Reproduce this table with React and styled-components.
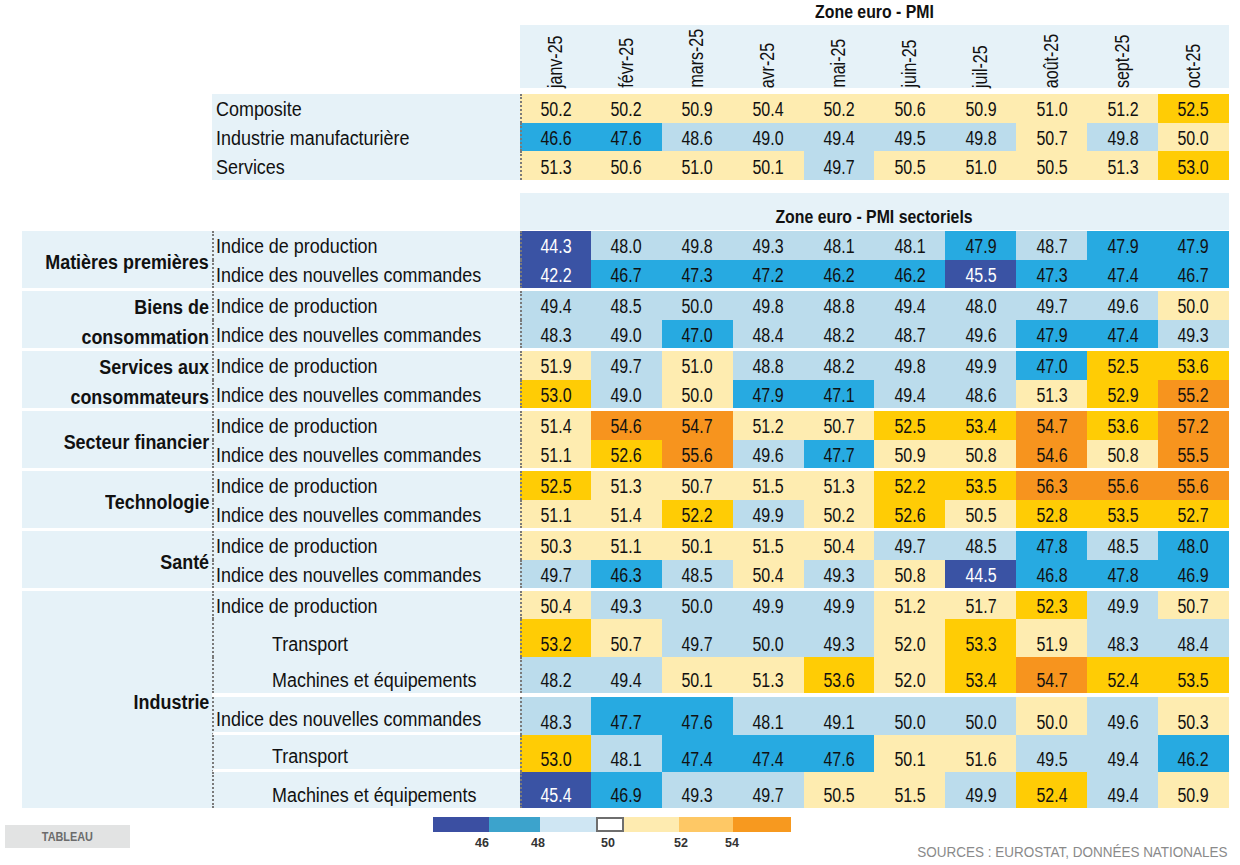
import React from 'react';
import styled, { createGlobalStyle, css } from 'styled-components';

const FONT = `"Liberation Sans", Arial, sans-serif`;
const LIGHT = '#e6f2f8';
const DOTS = '2px dotted #7a7a7a';

const LEVELS = {
  D: { bg: '#3a53a4', fg: '#fff' },
  B: { bg: '#27aae1', fg: '#111' },
  L: { bg: '#bbdcec', fg: '#111' },
  Y: { bg: '#feecb0', fg: '#111' },
  G: { bg: '#ffcc05', fg: '#111' },
  O: { bg: '#f7941e', fg: '#111' },
};

const MONTHS = ['janv-25', 'févr-25', 'mars-25', 'avr-25', 'mai-25', 'juin-25', 'juil-25', 'août-25', 'sept-25', 'oct-25'];

const TOP = [
  ['Composite', ['50.2', '50.2', '50.9', '50.4', '50.2', '50.6', '50.9', '51.0', '51.2', '52.5']],
  ['Industrie manufacturière', ['46.6', '47.6', '48.6', '49.0', '49.4', '49.5', '49.8', '50.7', '49.8', '50.0']],
  ['Services', ['51.3', '50.6', '51.0', '50.1', '49.7', '50.5', '51.0', '50.5', '51.3', '53.0']],
];

const PROD = 'Indice de production';
const CMD = 'Indice des nouvelles commandes';

const SECTORS = [
  { name: 'Matières premières', rows: [
    { label: PROD, v: ['44.3', '48.0', '49.8', '49.3', '48.1', '48.1', '47.9', '48.7', '47.9', '47.9'] },
    { label: CMD, v: ['42.2', '46.7', '47.3', '47.2', '46.2', '46.2', '45.5', '47.3', '47.4', '46.7'] },
  ] },
  { name: 'Biens de consommation', rows: [
    { label: PROD, v: ['49.4', '48.5', '50.0L', '49.8', '48.8', '49.4', '48.0', '49.7', '49.6', '50.0'] },
    { label: CMD, v: ['48.3', '49.0', '47.0', '48.4', '48.2', '48.7', '49.6', '47.9', '47.4', '49.3'] },
  ] },
  { name: 'Services aux consommateurs', rows: [
    { label: PROD, v: ['51.9', '49.7', '51.0', '48.8', '48.2', '49.8', '49.9', '47.0', '52.5', '53.6'] },
    { label: CMD, v: ['53.0', '49.0', '50.0', '47.9', '47.1', '49.4', '48.6', '51.3', '52.9', '55.2'] },
  ] },
  { name: 'Secteur financier', rows: [
    { label: PROD, v: ['51.4', '54.6', '54.7', '51.2', '50.7', '52.5', '53.4', '54.7', '53.6', '57.2'] },
    { label: CMD, v: ['51.1', '52.6', '55.6', '49.6', '47.7', '50.9', '50.8', '54.6', '50.8', '55.5'] },
  ] },
  { name: 'Technologie', rows: [
    { label: PROD, v: ['52.5', '51.3', '50.7', '51.5', '51.3', '52.2', '53.5', '56.3', '55.6', '55.6'] },
    { label: CMD, v: ['51.1', '51.4', '52.2', '49.9', '50.2', '52.6', '50.5', '52.8', '53.5', '52.7'] },
  ] },
  { name: 'Santé', rows: [
    { label: PROD, v: ['50.3', '51.1', '50.1', '51.5', '50.4', '49.7', '48.5', '47.8', '48.5', '48.0B'] },
    { label: CMD, v: ['49.7', '46.3', '48.5', '50.4', '49.3', '50.8', '44.5', '46.8', '47.8', '46.9'] },
  ] },
];

const INDUSTRIE = [
  { label: PROD, v: ['50.4', '49.3', '50.0L', '49.9', '49.9', '51.2', '51.7', '52.3', '49.9', '50.7'] },
  { label: 'Transport', indent: true, v: ['53.2', '50.7', '49.7', '50.0L', '49.3', '52.0Y', '53.3', '51.9', '48.3', '48.4'] },
  { label: 'Machines et équipements', indent: true, v: ['48.2', '49.4', '50.1', '51.3', '53.6', '52.0Y', '53.4', '54.7', '52.4', '53.5'] },
  'gap',
  { label: CMD, cut: true, v: ['48.3', '47.7', '47.6', '48.1', '49.1', '50.0L', '50.0L', '50.0', '49.6', '50.3'] },
  { label: 'Transport', indent: true, cut: true, v: ['53.0', '48.1', '47.4', '47.4', '47.6', '50.1', '51.6', '49.5', '49.4', '46.2'] },
  { label: 'Machines et équipements', indent: true, v: ['45.4', '46.9', '49.3', '49.7', '50.5', '51.5', '49.9', '52.4', '49.4', '50.9'] },
];

const LEGEND = [
  { w: 55.6, c: '#3b4fa2' },
  { w: 51.7, c: '#3ca3cc' },
  { w: 55.7, c: '#cfe6f3' },
  { w: 28.3, c: '#fff', box: true },
  { w: 54.3, c: '#feebb0' },
  { w: 54, c: '#fec865' },
  { w: 58, c: '#f7991f' },
];
const TICKS = [['46', 49], ['48', 105], ['50', 175], ['52', 248], ['54', 299]];

// "50.0L" forces a colour class, otherwise it comes from thresholds
function parse(raw) {
  const forced = /[A-Z]$/.test(raw) ? raw.slice(-1) : null;
  const text = forced ? raw.slice(0, -1) : raw;
  const n = parseFloat(text);
  let level = forced;
  if (!level) {
    if (n < 46) level = 'D';
    else if (n < 48) level = 'B';
    else if (n < 50) level = 'L';
    else if (n < 52) level = 'Y';
    else if (n < 54) level = 'G';
    else level = 'O';
  }
  return { text, level };
}

const GlobalStyle = createGlobalStyle`
  html, body {
    margin: 0;
    padding: 0;
    background: #fff;
  }
  body {
    font-family: ${FONT};
    color: #111;
  }
`;

const Page = styled.div`
  width: 1240px;
  height: 865px;
  overflow: hidden;
`;

const Sheet = styled.div`
  width: 1207px;
  margin-left: 22px;
`;

const Grid = styled.div`
  display: grid;
  grid-template-columns: 190px 308px repeat(10, 70.9px);
  ${p => p.$rows && css`grid-template-rows: ${p.$rows};`}
  ${p => p.$auto && css`grid-auto-rows: ${p.$auto};`}
  margin-top: ${p => p.$top || 0}px;
`;

// narrow-looking text: the glyphs are squeezed sideways, the box is kept
const Squeeze = styled.span`
  display: inline-block;
  transform: scaleX(${p => p.$x});
  transform-origin: ${p => p.$origin || 'center'} bottom;
  white-space: ${p => (p.$wrap ? 'normal' : 'nowrap')};
`;

const Title = styled.div`
  grid-column: 3 / -1;
  height: 25px;
  display: flex;
  align-items: center;
  justify-content: center;
  font-weight: bold;
  font-size: 18px;
`;

const MonthBand = styled.div`
  grid-column: 3 / -1;
  height: 63px;
  display: grid;
  grid-template-columns: repeat(10, 1fr);
  grid-template-rows: 63px;
  background: ${LIGHT};
`;

const MonthLabel = styled.span`
  writing-mode: vertical-rl;
  transform: rotate(180deg);
  justify-self: center;
  align-self: end;
  white-space: nowrap;
  font-size: 19.5px;
  line-height: 1;
`;

const MonthText = styled.span`
  display: inline-block;
  transform: scaleY(0.82);
  transform-origin: center top;
`;

const SubTitle = styled.div`
  grid-column: 3 / -1;
  height: 37px;
  box-sizing: border-box;
  padding-bottom: 2px;
  display: flex;
  align-items: flex-end;
  justify-content: center;
  background: ${LIGHT};
  font-weight: bold;
  font-size: 18px;
`;

const Blank = styled.div`
  grid-column: 1;
`;

const TopLabel = styled.div`
  grid-column: 2;
  display: flex;
  align-items: flex-end;
  padding: 0 0 3px 4px;
  background: ${LIGHT};
  font-size: 19.5px;
  line-height: 1;
`;

const SectorName = styled.div`
  grid-column: 1;
  grid-row: 1 / -1;
  display: flex;
  align-items: center;
  justify-content: flex-end;
  text-align: right;
  padding: 5px 3px 0 0;
  background: ${LIGHT};
  font-weight: bold;
  font-size: 19.5px;
  line-height: 30px;
`;

const Label = styled.div`
  grid-column: 2;
  display: flex;
  align-items: flex-end;
  box-sizing: border-box;
  padding: 0 0 3px ${p => (p.$indent ? 58 : 2)}px;
  border-left: ${DOTS};
  ${p => p.$cut && css`border-bottom: 3px solid #fff;`}
  background: ${LIGHT};
  font-size: 19.5px;
  line-height: 1;
`;

const Value = styled.div`
  display: flex;
  align-items: flex-end;
  justify-content: center;
  box-sizing: border-box;
  padding-bottom: 3px;
  background: ${p => LEVELS[p.$level].bg};
  color: ${p => LEVELS[p.$level].fg};
  ${p => p.$first && css`border-left: ${DOTS};`}
  font-size: 19.5px;
  line-height: 1;
`;

const SubGap = styled.div`
  grid-column: 2 / -1;
  background: #fff;
`;

const Footer = styled.div`
  display: flex;
  align-items: flex-start;
  height: 57px;
`;

const Tab = styled.div`
  margin: 17px 0 0 5px;
  width: 125px;
  height: 23px;
  display: flex;
  align-items: center;
  justify-content: center;
  background: #e2e3e3;
  color: #6b6b6b;
  font-weight: bold;
  font-size: 12.5px;
`;

const Legend = styled.div`
  margin: 9px 0 0 303px;
  width: 358px;
`;

const LegendBar = styled.div`
  display: flex;
  height: 15px;
`;

const Swatch = styled.div`
  flex: 0 0 ${p => p.$w}px;
  box-sizing: border-box;
  background: ${p => p.$c};
  ${p => p.$box && css`border: 2px solid #6e6e6e;`}
`;

const TickRow = styled.div`
  position: relative;
  height: 20px;
`;

const Tick = styled.span`
  position: absolute;
  top: 4px;
  transform: translateX(-50%);
  font-weight: bold;
  font-size: 12.5px;
  color: #333;
`;

const Sources = styled.div`
  align-self: flex-end;
  margin: 0 12px 4px auto;
  color: #8a8a8a;
  font-size: 15.5px;
`;

function Values({ list }) {
  return list.map((raw, i) => {
    const { text, level } = parse(raw);
    return (
      <Value key={i} $level={level} $first={i === 0}>
        <Squeeze $x={0.82}>{text}</Squeeze>
      </Value>
    );
  });
}

function SectorBlock({ sector, top }) {
  return (
    <Grid $rows="28.5px 28.5px" $top={top}>
      <SectorName>
        <Squeeze $x={0.92} $origin="right" $wrap>{sector.name}</Squeeze>
      </SectorName>
      {sector.rows.map((r, i) => (
        <React.Fragment key={i}>
          <Label>
            <Squeeze $x={0.92} $origin="left">{r.label}</Squeeze>
          </Label>
          <Values list={r.v} />
        </React.Fragment>
      ))}
    </Grid>
  );
}

function IndustrieBlock() {
  return (
    <Grid $rows="28px 38px 36px 4px 38px 37px 36px" $top={3}>
      <SectorName>
        <Squeeze $x={0.92} $origin="right">Industrie</Squeeze>
      </SectorName>
      {INDUSTRIE.map((r, i) =>
        r === 'gap' ? (
          <SubGap key={i} />
        ) : (
          <React.Fragment key={i}>
            <Label $indent={r.indent} $cut={r.cut}>
              <Squeeze $x={0.92} $origin="left">{r.label}</Squeeze>
            </Label>
            <Values list={r.v} />
          </React.Fragment>
        )
      )}
    </Grid>
  );
}

export default function App() {
  return (
    <Page>
      <GlobalStyle />
      <Sheet>
        <Grid>
          <Title>
            <Squeeze $x={0.88}>Zone euro - PMI</Squeeze>
          </Title>
          <MonthBand>
            {MONTHS.map(m => (
              <MonthLabel key={m}>
                <MonthText>{m}</MonthText>
              </MonthLabel>
            ))}
          </MonthBand>
        </Grid>

        <Grid $auto="28.7px" $top={6}>
          {TOP.map(([label, v]) => (
            <React.Fragment key={label}>
              <Blank />
              <TopLabel>
                <Squeeze $x={0.92} $origin="left">{label}</Squeeze>
              </TopLabel>
              <Values list={v} />
            </React.Fragment>
          ))}
        </Grid>

        <Grid $top={13}>
          <SubTitle>
            <Squeeze $x={0.88}>Zone euro - PMI sectoriels</Squeeze>
          </SubTitle>
        </Grid>

        {SECTORS.map((s, i) => (
          <SectorBlock key={s.name} sector={s} top={i === 0 ? 1 : 3} />
        ))}
        <IndustrieBlock />
      </Sheet>

      <Footer>
        <Tab>
          <Squeeze $x={0.87}>TABLEAU</Squeeze>
        </Tab>
        <Legend>
          <LegendBar>
            {LEGEND.map((s, i) => <Swatch key={i} $w={s.w} $c={s.c} $box={s.box} />)}
          </LegendBar>
          <TickRow>
            {TICKS.map(([t, x]) => <Tick key={t} style={{ left: x }}>{t}</Tick>)}
          </TickRow>
        </Legend>
        <Sources>
          <Squeeze $x={0.87} $origin="right">SOURCES : EUROSTAT, DONNÉES NATIONALES</Squeeze>
        </Sources>
      </Footer>
    </Page>
  );
}
